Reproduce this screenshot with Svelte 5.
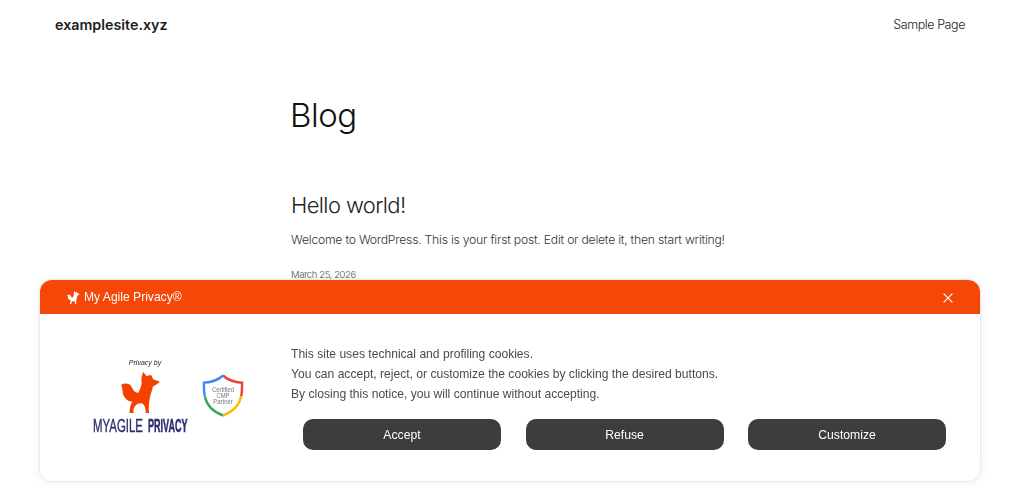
<script>
  const buttons = ['Accept', 'Refuse', 'Customize'];
  const lines = [
    'This site uses technical and profiling cookies.',
    'You can accept, reject, or customize the cookies by clicking the desired buttons.',
    'By closing this notice, you will continue without accepting.'
  ];
  const foxPath = 'M37 56C48 50 62 50 68 62 72 72 78 80 88 80 92 72 97 62 98 50 96 38 98 28 103 18L112 30 126 27 133 40 152 46C146 54 136 58 131 62 130 72 124 84 122 96 120 110 118 125 120 140L110 140C110 128 108 118 100 112 92 110 86 112 80 118 74 125 72 132 74 140L62 140C62 128 64 116 70 106 56 106 46 96 42 82 41 72 40 64 37 56Z';
</script>

<div class="page">
  <header class="site-header">
    <a class="brand" href="#top">examplesite.xyz</a>
    <a class="nav-link" href="#sample">Sample Page</a>
  </header>
  <main class="content">
    <h1>Blog</h1>
    <article>
      <h2>Hello world!</h2>
      <p>Welcome to WordPress. This is your first post. Edit or delete it, then start writing!</p>
      <time>March 25, 2026</time>
    </article>
  </main>
</div>

<aside class="banner">
  <div class="bar">
    <div class="bar-title">
      <svg class="mini-fox" viewBox="37 18 115 122" aria-hidden="true">
        <path d={foxPath} />
      </svg>
      <span>My Agile Privacy®</span>
    </div>
    <svg class="close" viewBox="0 0 10 10" aria-hidden="true">
      <path d="M.6.6 9.4 9.4M9.4.6.6 9.4" />
    </svg>
  </div>
  <div class="body">
    <div class="logos">
      <div class="logo">
        <span class="privacy-by">Privacy by</span>
        <svg class="fox" viewBox="37 18 115 122" aria-hidden="true">
          <path d={foxPath} />
        </svg>
        <svg class="wordmark" viewBox="0 0 95 16">
          <g transform="scale(1 1.85)">
            <text x="0" y="8" textLength="50" lengthAdjust="spacingAndGlyphs" class="wm wm-light">MYAGILE</text>
            <text x="55" y="8" textLength="39.5" lengthAdjust="spacingAndGlyphs" class="wm wm-bold">PRIVACY</text>
          </g>
        </svg>
      </div>
      <svg class="shield" viewBox="0 0 44 42" preserveAspectRatio="none">
        <g fill="none" stroke-width="2.5">
          <path stroke="#ea4335" d="M22 1.5C26 5 32 8 42 8.5 42 14 42 18 41 22" />
          <path stroke="#4285f4" d="M22 1.5C18 5 12 8 2 8.5 2 14 2 18 3 22" />
          <path stroke="#34a853" d="M3 22C5 31 12 37 22 40.5" />
          <path stroke="#fbbc04" d="M41 22C39 31 32 37 22 40.5" />
        </g>
        <text x="22" y="17.5" class="shield-text">Certified</text>
        <text x="22" y="23.5" class="shield-text">CMP</text>
        <text x="22" y="29.5" class="shield-text">Partner</text>
      </svg>
    </div>
    <div class="notice">
      <div class="copy">
        {#each lines as line}
          <p>{line}</p>
        {/each}
      </div>
      <div class="actions">
        {#each buttons as label}
          <button type="button">{label}</button>
        {/each}
      </div>
    </div>
  </div>
</aside>

<style>
  :global(body) {
    margin: 0;
    background: #fff;
    overflow: hidden;
  }

  .page {
    height: 488px;
    overflow: hidden;
    font-family: Inter, "Noto Sans", sans-serif;
    color: #222;
  }

  .site-header {
    display: flex;
    justify-content: space-between;
    align-items: center;
    padding: 13px 59px 1px 55px;
    height: 22px;
  }

  .brand {
    font-size: 14.3px;
    font-weight: 600;
    color: #1e1e1e;
    text-decoration: none;
  }

  .nav-link {
    font-size: 12.5px;
    font-weight: 300;
    letter-spacing: -0.42px;
    color: #222;
    text-decoration: none;
  }

  .content {
    padding: 58px 0 0 291px;
  }

  h1 {
    margin: 0 0 0 -1px;
    font-size: 33px;
    line-height: 42px;
    font-weight: 300;
    letter-spacing: -0.5px;
    color: #111;
  }

  article {
    margin-top: 55px;
  }

  h2 {
    margin: 0;
    font-size: 22px;
    line-height: 28px;
    font-weight: 300;
    letter-spacing: -0.6px;
    color: #222;
  }

  article p {
    margin: 12px 0 0;
    font-size: 12.2px;
    line-height: 18px;
    font-weight: 300;
    letter-spacing: -0.23px;
    color: #333;
  }

  time {
    display: block;
    margin-top: 19px;
    font-size: 9.5px;
    line-height: 14px;
    font-weight: 300;
    letter-spacing: -0.4px;
    color: #555;
  }

  .banner {
    position: fixed;
    left: 40px;
    top: 280px;
    width: 940px;
    height: 201px;
    background: #fff;
    border-radius: 12px;
    box-shadow: 0 0 0 1px rgba(0, 0, 0, 0.05), 0 0 12px rgba(0, 0, 0, 0.08);
    overflow: hidden;
    font-family: "Liberation Sans", Arial, sans-serif;
  }

  .bar {
    display: flex;
    justify-content: space-between;
    align-items: center;
    height: 34px;
    padding: 0 27px;
    background: #f44708;
    color: #fff;
  }

  .bar-title {
    display: flex;
    align-items: center;
    gap: 4px;
    font-size: 12.1px;
  }

  .mini-fox {
    width: 13px;
    height: 13px;
    fill: #fff;
  }

  .close {
    width: 10px;
    height: 10px;
    margin-top: 1px;
    stroke: #fff;
    stroke-width: 1.2;
    fill: none;
  }

  .body {
    display: flex;
    height: 167px;
  }

  .logos {
    display: flex;
    width: 251px;
    padding: 45px 0 0 53px;
    box-sizing: border-box;
    gap: 14px;
    align-items: flex-start;
  }

  .logo {
    display: flex;
    flex-direction: column;
    align-items: center;
    width: 95px;
    flex: none;
  }

  .privacy-by {
    margin-left: 9px;
    font-size: 7px;
    line-height: 8px;
    font-style: italic;
    color: #222;
  }

  .fox {
    width: 39px;
    height: 41px;
    margin: 5px 0 0 -1px;
    fill: #f44100;
  }

  .wordmark {
    width: 95px;
    height: 16px;
    margin-top: 4px;
    overflow: visible;
  }

  .wm {
    font-size: 9.5px;
    fill: #2e2f6e;
  }

  .wm-light {
    stroke: #2e2f6e;
    stroke-width: 0.2;
  }

  .wm-bold {
    font-weight: 700;
    stroke: #2e2f6e;
    stroke-width: 0.3;
  }

  .shield {
    width: 42px;
    height: 43px;
    margin-top: 15px;
    flex: none;
  }

  .shield-text {
    font-size: 6.2px;
    fill: #777;
    text-anchor: middle;
  }

  .notice {
    flex: 1;
    padding-top: 30px;
  }

  .copy p {
    margin: 0;
    font-size: 12.1px;
    line-height: 20px;
    color: #4a4a4a;
  }

  .actions {
    display: flex;
    gap: 24.5px;
    margin: 15px 0 0 12px;
  }

  button {
    width: 198px;
    height: 31px;
    border: 0;
    border-radius: 10px;
    padding: 0;
    background: #3d3d3d;
    color: #fff;
    font-family: inherit;
    font-size: 12.2px;
  }
</style>
